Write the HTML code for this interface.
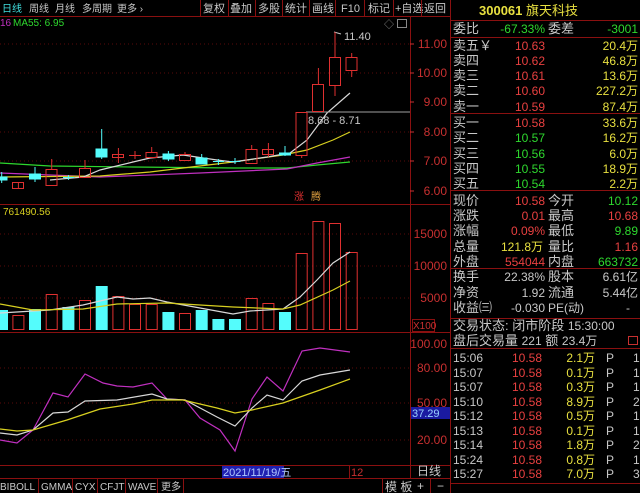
<!DOCTYPE html>
<html><head><meta charset="utf-8"><style>
html,body{margin:0;padding:0;background:#000;width:640px;height:493px;overflow:hidden}
svg{display:block;font-family:"Liberation Sans","Noto Sans CJK SC",sans-serif}
</style></head><body>
<svg width="640" height="493" viewBox="0 0 640 493" xmlns="http://www.w3.org/2000/svg">
<rect width="640" height="493" fill="#000"/>
<!-- toolbar -->
<g font-size="11" fill="#c8c8c8">
<text x="2" y="12" fill="#40e0e0" font-size="10">日线</text>
<text x="29" y="12" font-size="10">周线</text>
<text x="55" y="12" font-size="10">月线</text>
<text x="82" y="12" font-size="10">多周期</text>
<text x="117" y="12" font-size="10">更多 ›</text>
<text x="203" y="12">复权</text>
<text x="230" y="12">叠加</text>
<text x="258" y="12">多股</text>
<text x="285" y="12">统计</text>
<text x="312" y="12">画线</text>
<text x="341" y="12">F10</text>
<text x="368" y="12">标记</text>
<text x="395" y="12">+自选</text>
<text x="424" y="12">返回</text>
</g>
<g stroke="#8a1010" stroke-width="1">
<line x1="0" y1="16.5" x2="450" y2="16.5"/>
<line x1="200.5" y1="0" x2="200.5" y2="16"/><line x1="228.5" y1="0" x2="228.5" y2="16"/>
<line x1="255.5" y1="0" x2="255.5" y2="16"/><line x1="282.5" y1="0" x2="282.5" y2="16"/>
<line x1="309.5" y1="0" x2="309.5" y2="16"/><line x1="335.5" y1="0" x2="335.5" y2="16"/>
<line x1="364.5" y1="0" x2="364.5" y2="16"/><line x1="393.5" y1="0" x2="393.5" y2="16"/>
<line x1="421.5" y1="0" x2="421.5" y2="16"/>
<line x1="410.5" y1="16" x2="410.5" y2="478"/>
<line x1="450.5" y1="0" x2="450.5" y2="493"/>
<line x1="0" y1="204.5" x2="450" y2="204.5"/>
<line x1="0" y1="332.5" x2="450" y2="332.5"/>
<line x1="0" y1="465.5" x2="450" y2="465.5"/>
<line x1="0" y1="478.5" x2="450" y2="478.5"/>
<line x1="38.5" y1="478" x2="38.5" y2="493"/><line x1="72.5" y1="478" x2="72.5" y2="493"/>
<line x1="97.5" y1="478" x2="97.5" y2="493"/><line x1="125.5" y1="478" x2="125.5" y2="493"/>
<line x1="157.5" y1="478" x2="157.5" y2="493"/><line x1="183.5" y1="478" x2="183.5" y2="493"/>
<line x1="382.5" y1="478" x2="382.5" y2="493"/><line x1="430.5" y1="478" x2="430.5" y2="493"/>
</g>
<!-- grid -->
<g stroke="#5a0a0a" stroke-dasharray="1 3">
<line x1="0" y1="44" x2="410" y2="44"/><line x1="0" y1="73" x2="410" y2="73"/>
<line x1="0" y1="132" x2="410" y2="132"/><line x1="0" y1="161" x2="410" y2="161"/>
<line x1="0" y1="234" x2="410" y2="234"/><line x1="0" y1="266" x2="410" y2="266"/><line x1="0" y1="298" x2="410" y2="298"/>
<line x1="0" y1="368" x2="410" y2="368"/><line x1="0" y1="403" x2="410" y2="403"/><line x1="0" y1="440" x2="410" y2="440"/>
</g>
<!-- axis labels -->
<g font-size="12" fill="#c83030" text-anchor="end">
<text x="447" y="48">11.00</text><text x="447" y="77">10.00</text><text x="447" y="106">9.00</text>
<text x="447" y="136">8.00</text><text x="447" y="165">7.00</text><text x="447" y="195">6.00</text>
<text x="447" y="238">15000</text><text x="447" y="270">10000</text><text x="447" y="302">5000</text>
<text x="447" y="348">100.00</text><text x="447" y="372">80.00</text><text x="447" y="407">50.00</text><text x="447" y="444">20.00</text>
</g>
<g stroke="#c83030" stroke-width="1"><line x1="410" y1="44" x2="414" y2="44"/><line x1="410" y1="73" x2="414" y2="73"/><line x1="410" y1="102" x2="414" y2="102"/><line x1="410" y1="132" x2="414" y2="132"/><line x1="410" y1="161" x2="414" y2="161"/><line x1="410" y1="191" x2="414" y2="191"/></g>
<rect x="412.5" y="319.5" width="22" height="12" fill="none" stroke="#8a1010"/>
<text x="413" y="329" font-size="10" fill="#c83030">X100</text>
<rect x="411" y="407" width="39" height="12" fill="#1a1aa0"/>
<text x="412" y="417" font-size="11" fill="#9ad0ff">37.29</text>
<text x="417" y="475" font-size="12" fill="#c8c8c8">日线</text>
<text x="417" y="490" font-size="12" fill="#c8c8c8">+</text><text x="437" y="490" font-size="12" fill="#c8c8c8">−</text>
<!-- price legend -->
<text x="0" y="26" font-size="10" fill="#c030c0">16</text>
<text x="13" y="26" font-size="10" fill="#2ed82e">MA55: 6.95</text>
<text x="384" y="28" font-size="10" fill="#888">◇</text>
<rect x="397.5" y="19.5" width="9" height="8" fill="none" stroke="#888"/>
<!-- MA lines price -->
<g fill="none" stroke-width="1.2">
<polyline stroke="#2ed82e" points="0,163 50,166 133,167 233,168 287,168 317,165 350,162"/>
<polyline stroke="#c030c0" points="0,173 100,177 200,173 287,169 317,163 350,157"/>
<polyline stroke="#d8d020" points="0,177 100,176 150,172 183,168 233,162 283,155 307,150 333,140 350,132"/>
<polyline stroke="#d8d8d8" points="50,180 83,177 100,170 133,162 150,158 183,155 217,160 233,162 267,157 290,153 307,140 327,113 350,93"/>
</g>
<line x1="306" y1="112" x2="410" y2="112" stroke="#a0a0a0"/>
<text x="308" y="124" font-size="11" fill="#c8c8c8">8.68 - 8.71</text>
<polyline points="334,32 341,34" stroke="#c8c8c8" fill="none"/>
<text x="344" y="40" font-size="11" fill="#c8c8c8">11.40</text>
<!-- candles -->
<g stroke="#e03030" fill="none" stroke-width="1">
<line x1="18.4" y1="182" x2="18.4" y2="188"/><rect x="12.5" y="182.5" width="11" height="6"/>
<line x1="51.7" y1="159" x2="51.7" y2="169"/><rect x="46" y="169.5" width="11" height="16"/>
<line x1="85" y1="160" x2="85" y2="168"/><rect x="79.5" y="168.5" width="11" height="9"/>
<line x1="118.4" y1="148" x2="118.4" y2="163"/><rect x="112.5" y="154.5" width="11" height="3"/>
<line x1="135" y1="151" x2="135" y2="159"/><line x1="129" y1="155.5" x2="141" y2="155.5"/>
<line x1="151.7" y1="147" x2="151.7" y2="152"/><rect x="146" y="152.5" width="11" height="5"/>
<rect x="179.5" y="154.5" width="11" height="6"/><line x1="185" y1="152" x2="185" y2="154"/>
<line x1="251.7" y1="145" x2="251.7" y2="149"/><rect x="246" y="149.5" width="11" height="14"/>
<line x1="268.4" y1="143" x2="268.4" y2="157"/><rect x="262.5" y="149.5" width="11" height="5"/>
<line x1="301.7" y1="155" x2="301.7" y2="158"/><rect x="296" y="112.5" width="11" height="43"/>
<line x1="318.4" y1="68" x2="318.4" y2="84"/><rect x="312.5" y="84.5" width="11" height="27"/>
<line x1="335" y1="32" x2="335" y2="57"/><line x1="335" y1="85" x2="335" y2="96"/><rect x="329.5" y="57.5" width="11" height="28"/>
<line x1="351.7" y1="53" x2="351.7" y2="57"/><line x1="351.7" y1="70" x2="351.7" y2="77"/><rect x="346" y="57.5" width="11" height="13"/>
</g>
<g stroke="#54fcfc" fill="#54fcfc" stroke-width="1">
<line x1="1.7" y1="172" x2="1.7" y2="183"/><rect x="-4" y="177" width="11" height="3"/>
<line x1="35" y1="167" x2="35" y2="182"/><rect x="29.5" y="174" width="11" height="5"/>
<line x1="68.4" y1="175" x2="68.4" y2="180"/><line x1="63" y1="177.5" x2="74" y2="177.5"/>
<line x1="101.7" y1="129" x2="101.7" y2="159"/><rect x="96" y="149" width="11" height="8"/>
<line x1="168.4" y1="151" x2="168.4" y2="161"/><rect x="163" y="154" width="11" height="5"/>
<line x1="201.7" y1="154" x2="201.7" y2="164"/><rect x="196" y="158" width="11" height="6"/>
<line x1="218.4" y1="159" x2="218.4" y2="165"/><line x1="213" y1="161.5" x2="224" y2="161.5"/>
<line x1="235" y1="158" x2="235" y2="164"/><line x1="229.5" y1="161.5" x2="240.5" y2="161.5"/>
<line x1="285" y1="146" x2="285" y2="156"/><rect x="279.5" y="153" width="11" height="2"/>
</g>
<text x="294" y="200" font-size="10" fill="#e03030">涨</text>
<text x="311" y="200" font-size="10" fill="#e0a040">腾</text>
<!-- volume -->
<text x="3" y="215" font-size="10" fill="#d8d020">761490.56</text>
<g fill="#54fcfc">
<rect x="0" y="310" width="8" height="20"/><rect x="29" y="309" width="12" height="21"/>
<rect x="62.4" y="307" width="12" height="23"/><rect x="95.7" y="286" width="12" height="44"/>
<rect x="162.4" y="312" width="12" height="18"/><rect x="195.7" y="310" width="12" height="20"/>
<rect x="212.4" y="319" width="12" height="11"/><rect x="229" y="319" width="12" height="11"/>
<rect x="279" y="312" width="12" height="18"/>
</g>
<g fill="none" stroke="#e03030">
<rect x="12.9" y="315.5" width="11" height="14"/><rect x="46.2" y="294.5" width="11" height="35"/>
<rect x="79.5" y="300.5" width="11" height="29"/><rect x="112.9" y="296.5" width="11" height="33"/>
<rect x="129.5" y="304.5" width="11" height="25"/><rect x="146.2" y="304.5" width="11" height="25"/>
<rect x="179.5" y="313.5" width="11" height="16"/><rect x="246.2" y="298.5" width="11" height="31"/>
<rect x="262.9" y="303.5" width="11" height="26"/><rect x="296.2" y="253.5" width="11" height="76"/>
<rect x="312.9" y="221.5" width="11" height="108"/><rect x="329.5" y="223.5" width="11" height="106"/>
<rect x="346.2" y="252.5" width="11" height="77"/>
</g>
<g fill="none" stroke-width="1.2">
<polyline stroke="#d8d8d8" points="0,313 50,310 83,305 117,297 133,299 150,298 167,302 200,308 233,314 250,311 283,309 300,297 317,280 333,263 350,252"/>
<polyline stroke="#d8d020" points="0,304 33,310 83,309 117,304 167,303 233,307 283,309 300,305 333,290 350,281"/>
</g>
<!-- indicator -->
<g fill="none" stroke-width="1.2">
<polyline stroke="#c030c0" points="0,440 17,443 33,430 53,393 68,397 85,374 103,383 117,386 133,387 152,383 167,399 185,400 200,418 220,430 235,451 252,399 267,377 283,391 302,351 320,348 350,352"/>
<polyline stroke="#d8d8d8" points="0,433 17,435 33,430 53,413 68,412 85,401 117,400 152,394 167,399 185,400 217,417 235,426 252,408 267,395 283,400 302,381 320,375 350,370"/>
<polyline stroke="#d8d020" points="0,429 17,431 33,430 67,420 100,409 133,404 152,400 183,400 217,408 235,413 252,410 283,403 320,390 350,379"/>
</g>
<!-- date row -->
<rect x="222" y="466" width="62" height="12" fill="#2020b0"/>
<text x="223" y="476" font-size="11" fill="#b0c8ff">2021/11/19/五</text>
<line x1="349.5" y1="466" x2="349.5" y2="478" stroke="#8a1010"/>
<text x="351" y="476" font-size="11" fill="#c83030">12</text>
<g font-size="10" fill="#c8c8c8">
<text x="0" y="490">BIBOLL</text><text x="41" y="490">GMMA</text><text x="75" y="490">CYX</text>
<text x="100" y="490">CFJT</text><text x="128" y="490">WAVE</text><text x="161" y="490">更多</text>
<text x="385" y="491" font-size="12">模 板</text>
</g>
<!-- right panel -->
<g stroke="#8a1010">
<line x1="450" y1="20.5" x2="640" y2="20.5"/>
<line x1="450" y1="37.5" x2="640" y2="37.5"/>
<line x1="450" y1="113.5" x2="640" y2="113.5"/>
<line x1="450" y1="190.5" x2="640" y2="190.5"/>
<line x1="450" y1="268.5" x2="640" y2="268.5"/>
<line x1="450" y1="318.5" x2="640" y2="318.5"/>
<line x1="450" y1="348.5" x2="640" y2="348.5"/>
<line x1="450" y1="483.5" x2="640" y2="483.5"/>
</g>
<text x="479" y="15" font-size="13" fill="#e8e040" font-weight="bold">300061 <tspan font-weight="normal">旗天科技</tspan></text>
<g font-size="13" fill="#c8c8c8">
<text x="453" y="33">委比</text><text x="548" y="33">委差</text>
<text x="453" y="50">卖五￥</text><text x="453" y="65">卖四</text><text x="453" y="80">卖三</text><text x="453" y="95">卖二</text><text x="453" y="111">卖一</text>
<text x="453" y="127">买一</text><text x="453" y="142">买二</text><text x="453" y="158">买三</text><text x="453" y="173">买四</text><text x="453" y="188">买五</text>
<text x="453" y="205">现价</text><text x="453" y="220">涨跌</text><text x="453" y="235">涨幅</text><text x="453" y="251">总量</text><text x="453" y="266">外盘</text>
<text x="548" y="205">今开</text><text x="548" y="220">最高</text><text x="548" y="235">最低</text><text x="548" y="251">量比</text><text x="548" y="266">内盘</text>
<text x="453" y="281">换手</text><text x="453" y="297">净资</text><text x="453" y="312">收益㈢</text>
<text x="548" y="281">股本</text><text x="548" y="297">流通</text><text x="548" y="312" font-size="12">PE(动)</text>
<text x="453" y="330">交易状态: 闭市阶段 <tspan font-size="12">15:30:00</tspan></text>
<text x="453" y="345">盘后交易量 <tspan font-size="12">221</tspan> 额 <tspan font-size="12">23.4万</tspan></text>
</g>
<g font-size="12" text-anchor="end">
<text x="545" y="33" fill="#2ed82e">-67.33%</text><text x="638" y="33" fill="#2ed82e">-3001</text>
<g fill="#e84040"><text x="545" y="50">10.63</text><text x="545" y="65">10.62</text><text x="545" y="80">10.61</text><text x="545" y="95">10.60</text><text x="545" y="111">10.59</text><text x="545" y="127">10.58</text></g>
<g fill="#2ed82e"><text x="545" y="142">10.57</text><text x="545" y="158">10.56</text><text x="545" y="173">10.55</text><text x="545" y="188">10.54</text></g>
<g fill="#e8e040"><text x="638" y="50">20.4万</text><text x="638" y="65">46.8万</text><text x="638" y="80">13.6万</text><text x="638" y="95">227.2万</text><text x="638" y="111">87.4万</text>
<text x="638" y="127">33.6万</text><text x="638" y="142">16.2万</text><text x="638" y="158">6.0万</text><text x="638" y="173">18.9万</text><text x="638" y="188">2.2万</text>
<text x="543" y="251">121.8万</text></g>
<text x="545" y="205" fill="#e84040">10.58</text><text x="545" y="220" fill="#e84040">0.01</text><text x="545" y="235" fill="#e84040">0.09%</text><text x="545" y="266" fill="#e84040">554044</text>
<text x="638" y="205" fill="#2ed82e">10.12</text><text x="638" y="220" fill="#e84040">10.68</text><text x="638" y="235" fill="#2ed82e">9.89</text><text x="638" y="251" fill="#e84040">1.16</text><text x="638" y="266" fill="#2ed82e">663732</text>
<g fill="#c8c8c8"><text x="545" y="281">22.38%</text><text x="545" y="297">1.92</text><text x="545" y="312">-0.030</text>
<text x="638" y="281">6.61亿</text><text x="638" y="297">5.44亿</text><text x="630" y="312">-</text></g>
</g>
<rect x="628.5" y="336.5" width="9" height="8" fill="none" stroke="#c83030"/>
<g font-size="12" fill="#c8c8c8">
<text x="453" y="362">15:06</text><text x="453" y="377">15:07</text><text x="453" y="391">15:07</text><text x="453" y="406">15:10</text><text x="453" y="420">15:12</text><text x="453" y="435">15:13</text><text x="453" y="449">15:14</text><text x="453" y="464">15:24</text><text x="453" y="478">15:27</text>
</g>
<g font-size="12" fill="#e84040" text-anchor="end">
<text x="542" y="362">10.58</text><text x="542" y="377">10.58</text><text x="542" y="391">10.58</text><text x="542" y="406">10.58</text><text x="542" y="420">10.58</text><text x="542" y="435">10.58</text><text x="542" y="449">10.58</text><text x="542" y="464">10.58</text><text x="542" y="478">10.58</text>
</g>
<g font-size="12" fill="#e8e040" text-anchor="end">
<text x="595" y="362">2.1万</text><text x="595" y="377">0.1万</text><text x="595" y="391">0.3万</text><text x="595" y="406">8.9万</text><text x="595" y="420">0.5万</text><text x="595" y="435">0.1万</text><text x="595" y="449">1.8万</text><text x="595" y="464">0.8万</text><text x="595" y="478">7.0万</text>
</g>
<g font-size="12" fill="#c8c8c8">
<text x="606" y="362">P</text><text x="606" y="377">P</text><text x="606" y="391">P</text><text x="606" y="406">P</text><text x="606" y="420">P</text><text x="606" y="435">P</text><text x="606" y="449">P</text><text x="606" y="464">P</text><text x="606" y="478">P</text>
<text x="633" y="362">1</text><text x="633" y="377">1</text><text x="633" y="391">1</text><text x="633" y="406">2</text><text x="633" y="420">1</text><text x="633" y="435">1</text><text x="633" y="449">2</text><text x="633" y="464">1</text><text x="633" y="478">3</text>
</g>
</svg>
</body></html>
